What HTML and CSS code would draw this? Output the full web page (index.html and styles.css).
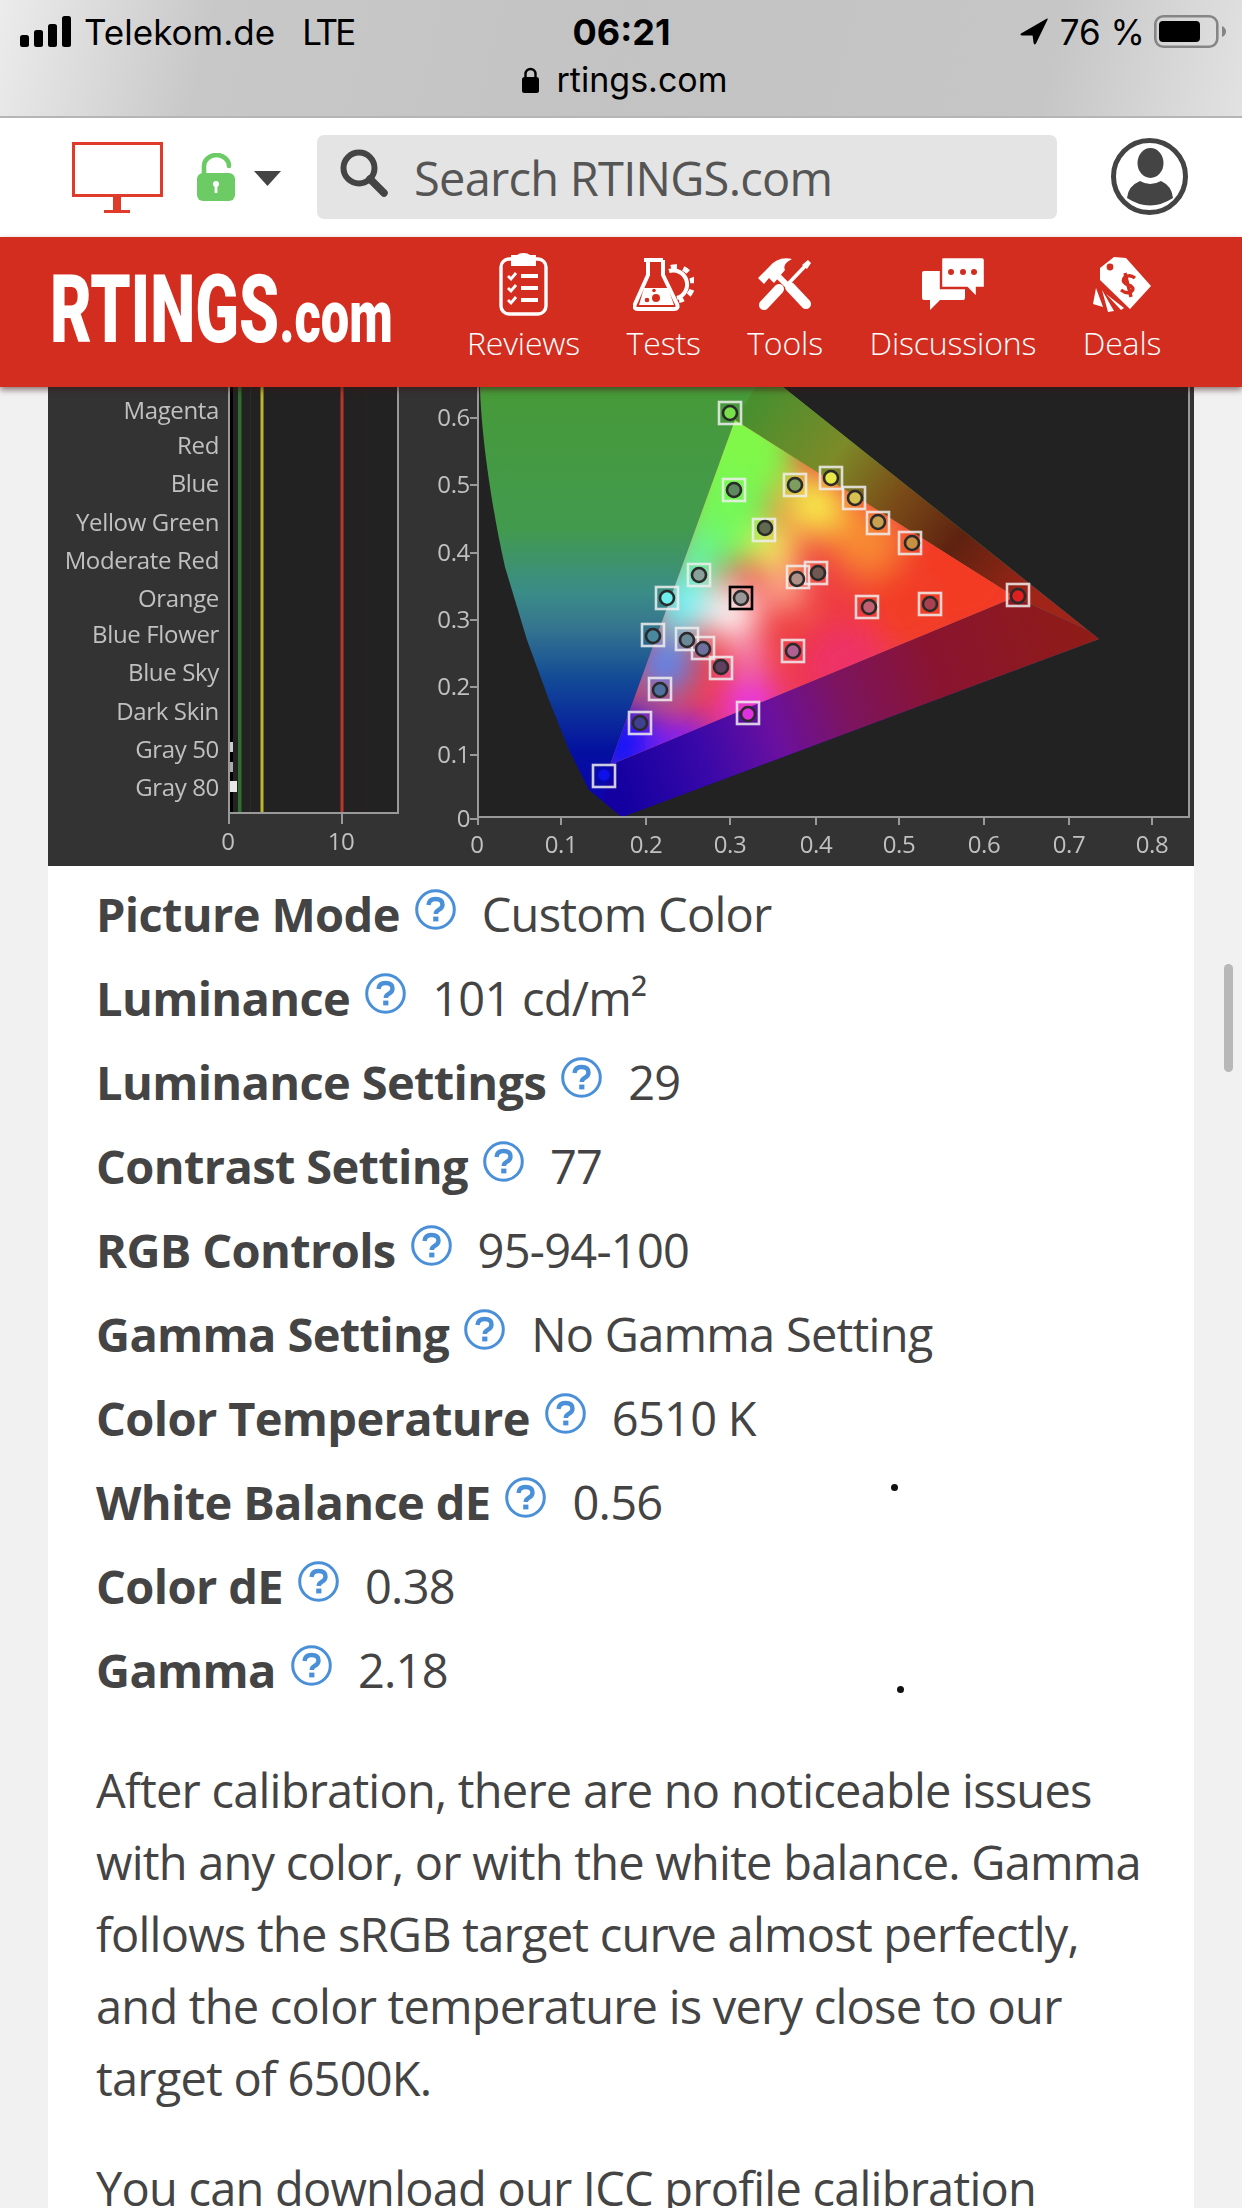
FILE: index.html
```html
<!DOCTYPE html>
<html lang="en">
<head>
<meta charset="utf-8">
<title>RTINGS.com</title>
<link rel="stylesheet" href="styles.css">
</head>
<body>
<svg class="defs" width="0" height="0">
  <symbol id="help" viewBox="0 0 41 41">
    <circle cx="20.5" cy="20.5" r="18.8" fill="none" stroke="#4a90d9" stroke-width="3"/>
    <path d="M13.5 16 Q14 10 20.5 10 Q27.5 10 27.5 15.5 Q27.5 19 23.5 21 Q20.8 22.4 20.8 25" fill="none" stroke="#4a90d9" stroke-width="4.4"/>
    <rect x="18.2" y="27.6" width="5.2" height="4.8" fill="#4a90d9"/>
  </symbol>
</svg>

<div class="status">
  <div class="status-top">
    <div class="status-left">
      <svg class="signal" width="51" height="31" viewBox="0 0 51 31"><rect x="0" y="19" width="9" height="12" rx="2.5"/><rect x="14" y="14" width="9" height="17" rx="2.5"/><rect x="28" y="8" width="9" height="23" rx="2.5"/><rect x="42" y="0" width="9" height="31" rx="2.5"/></svg>
      <span>Telekom.de</span><span class="lte">LTE</span>
    </div>
    <div class="status-time">06:21</div>
    <div class="status-right">
      <svg class="arrow" width="28" height="27" viewBox="0 0 28 27"><path d="M1 15.5 L27 0.5 Q28 0 27.6 1.5 L16 25.5 Q14.5 27.5 13.6 25 L12.6 17.5 L2 17.5 Q-0.5 16.8 1 15.5Z"/></svg>
      <span>76 %</span>
      <svg class="battery" width="72" height="33" viewBox="0 0 72 33"><rect x="1.3" y="1.3" width="62" height="30.4" rx="8" fill="none" stroke="#858585" stroke-width="2.6"/><rect x="5" y="6" width="41" height="21" rx="4" fill="#000"/><path d="M68 11 Q72 13 72 16.5 Q72 20 68 22Z" fill="#858585"/></svg>
    </div>
  </div>
  <div class="status-url">
    <svg width="17" height="26" viewBox="0 0 17 26"><path d="M3.5 11 V7 a5 5 0 0 1 10 0 V11" fill="none" stroke="#000" stroke-width="2.4"/><rect x="0" y="10" width="17" height="16" rx="2.5"/></svg>
    <span>rtings.com</span>
  </div>
</div>

<header class="topbar">
  <svg class="monitor" width="91" height="71" viewBox="0 0 91 71"><rect x="1.5" y="1.5" width="88" height="52" fill="none" stroke="#e03a2b" stroke-width="3"/><rect x="41" y="55" width="8" height="13" fill="#e03a2b"/><rect x="32" y="68" width="26" height="3" fill="#e03a2b"/></svg>
  <svg class="lock" width="38" height="48" viewBox="0 0 38 48"><path d="M7 24 V13 a12.5 11 0 0 1 25 0 V13" fill="none" stroke="#6ccb64" stroke-width="4.6" stroke-linecap="round"/><rect x="0" y="20" width="38" height="28" rx="6" fill="#6ccb64"/><circle cx="19" cy="31" r="3" fill="#fff"/><rect x="17.6" y="31" width="2.8" height="9" fill="#fff"/></svg>
  <svg class="caret" width="29" height="16" viewBox="0 0 29 16"><path d="M1 1 H28 L14.5 16Z" fill="#444"/></svg>
  <div class="search">
    <svg width="48" height="48" viewBox="0 0 48 48"><circle cx="19" cy="19" r="15.5" fill="none" stroke="#444" stroke-width="6"/><path d="M30 30 L44 44" stroke="#444" stroke-width="7.5" stroke-linecap="round"/></svg>
    <span>Search RTINGS.com</span>
  </div>
  <svg class="user" width="77" height="77" viewBox="0 0 77 77"><circle cx="38.5" cy="38.5" r="36" fill="none" stroke="#444" stroke-width="5"/><ellipse cx="39.5" cy="25" rx="13" ry="15" fill="#444"/><path d="M16 60 Q17 48 29 43 Q39 49 50 43 Q61 48 62 60 Q39 75 16 60Z" fill="#444"/></svg>
</header>

<nav class="redbar">
  <div class="logo"><span class="logo-main">RTINGS</span><span class="logo-sub">.com</span></div>
  <ul class="menu">
    <li class="menu-item">
      <svg width="49" height="63" viewBox="0 0 49 63"><rect x="2" y="6" width="45" height="55" rx="8" fill="none" stroke="#fff" stroke-width="3.4"/><path d="M12 2 H18 Q20 0 24.5 0 Q29 0 31 2 H37 V13 H12Z" fill="#fff"/><path d="M9 23 l3 3 l5 -6 M9 35 l3 3 l5 -6 M9 47 l3 3 l5 -6" fill="none" stroke="#fff" stroke-width="2.8"/><path d="M22 23 H39 M22 35 H39 M22 47 H39" stroke="#fff" stroke-width="4"/></svg>
      <span>Reviews</span>
    </li>
    <li class="menu-item">
      <svg width="61" height="53" viewBox="0 0 61 53"><path d="M36 13 A14 14 0 1 1 44 40" fill="none" stroke="#fff" stroke-width="4"/><path d="M38 9.5 A17 17 0 1 1 46 42.5" fill="none" stroke="#fff" stroke-width="5" stroke-dasharray="6 6.5"/><path d="M11 2 H30 M15 2 V17 L2 46 Q0 51 5 51 H41 Q46 51 44 46 L30 17 V2" fill="#d32d1f" stroke="#fff" stroke-width="4" stroke-linejoin="round"/><path d="M11 30 H35 L41 47 H6Z" fill="#fff"/><circle cx="23" cy="40" r="4" fill="#d32d1f"/><circle cx="14" cy="42" r="2.3" fill="#d32d1f"/><circle cx="21" cy="32.5" r="1.8" fill="#d32d1f"/></svg>
      <span>Tests</span>
    </li>
    <li class="menu-item">
      <svg width="54" height="53" viewBox="0 0 54 53"><path d="M51 4 L29 27" stroke="#fff" stroke-width="3.6"/><path d="M50 2 L53 5 L49 11 L44 7Z" fill="#fff"/><path d="M21 31 L6 47" stroke="#fff" stroke-width="10" stroke-linecap="round"/><path d="M32 29 L48 46" stroke="#fff" stroke-width="10" stroke-linecap="round"/><path d="M16 14 L31 29" stroke="#fff" stroke-width="6"/><path d="M0 20 L11 9 Q20 -2 34 1 Q24 6 27 12 L16 25 L11 20 L6 26Z" fill="#fff"/></svg>
      <span>Tools</span>
    </li>
    <li class="menu-item">
      <svg width="62" height="53" viewBox="0 0 62 53"><path d="M2 13 H41 Q43 13 43 15 V40 Q43 42 41 42 H18 L8 52 V42 H2 Q0 42 0 40 V15 Q0 13 2 13Z" fill="#fff"/><path d="M21 -1 H60 Q63 -1 63 2 V30 H55 V40 L45 30 H19 V2 Q19 -1 21 -1Z" fill="#fff" stroke="#d32d1f" stroke-width="2.4"/><circle cx="29" cy="14" r="3" fill="#d32d1f"/><circle cx="41" cy="14" r="3" fill="#d32d1f"/><circle cx="52" cy="14" r="3" fill="#d32d1f"/></svg>
      <span>Discussions</span>
    </li>
    <li class="menu-item">
      <svg width="58" height="55" viewBox="0 0 58 55"><path d="M3 31 L10 50 L0 47Z M9 33 L21 54 L15 55Z" fill="#fff"/><path d="M13 37 L28 53 L31 51Z" fill="#fff"/><path d="M7 11 L21 0 L33 1 L58 29 L37 52 L7 23Z" fill="#fff"/><circle cx="17" cy="10" r="3.4" fill="#d32d1f"/><path d="M42 21 Q37 17 32 20 Q28 24 33 27 L38 29 Q42 32 38 35 Q33 37 28 33 M32 16 L38 40" fill="none" stroke="#d32d1f" stroke-width="3.4"/></svg>
      <span>Deals</span>
    </li>
  </ul>
</nav>

<main class="page">
  <article class="card">
    <svg class="chart" width="1146" height="479" viewBox="48 387 1146 479">
      <defs>
        <clipPath id="locus"><path d="M480 387 C481 430 490 500 505 567 L527 640 L549 700 L569 750 L589 790 L622 817 L1099 639 L783 387Z"/></clipPath>
        <clipPath id="tri"><path d="M735 420 L1015 597 L610 765Z"/></clipPath>
        <filter id="soft" x="-60%" y="-60%" width="220%" height="220%"><feGaussianBlur stdDeviation="16"/></filter>
        <linearGradient id="leftfade" x1="0" y1="387" x2="0" y2="817" gradientUnits="userSpaceOnUse">
          <stop offset="0" stop-color="#479a38"/><stop offset=".33" stop-color="#429a4e"/><stop offset=".48" stop-color="#3a8c88"/><stop offset=".56" stop-color="#35758f"/><stop offset=".68" stop-color="#124a96"/><stop offset=".85" stop-color="#0410a0"/><stop offset="1" stop-color="#1000b0"/>
        </linearGradient>
        <linearGradient id="topwedge" x1="760" y1="400" x2="1030" y2="600" gradientUnits="userSpaceOnUse">
          <stop offset="0" stop-color="#4a8f2e"/><stop offset=".28" stop-color="#7d8a28"/><stop offset=".5" stop-color="#7a4c18"/><stop offset=".72" stop-color="#5e2210"/><stop offset="1" stop-color="#a02518"/>
        </linearGradient>
        <linearGradient id="botwedge" x1="620" y1="790" x2="1090" y2="630" gradientUnits="userSpaceOnUse">
          <stop offset="0" stop-color="#1400a0"/><stop offset=".18" stop-color="#3a08a8"/><stop offset=".33" stop-color="#6a10a0"/><stop offset=".48" stop-color="#7c1460"/><stop offset=".68" stop-color="#8a1430"/><stop offset="1" stop-color="#8f1c16"/>
        </linearGradient>
      </defs>
      <rect class="panel" x="48" y="387" width="1146" height="479"/>

      <rect class="plot" x="229" y="387" width="169" height="426"/>
      <rect class="axis" x="397" y="387" width="2" height="427"/>
      <rect class="axis" x="228" y="812" width="171" height="2"/>
      <rect class="axis" x="228" y="387" width="2" height="437"/>
      <rect x="230" y="387" width="3" height="425" fill="#000"/>
      <rect x="238" y="387" width="3.5" height="425" fill="#2f6e2c"/>
      <rect x="260.5" y="387" width="3" height="425" fill="#bdb52e"/>
      <rect x="340.5" y="387" width="3" height="425" fill="#b8362a"/>
      <rect x="250" y="387" width="1" height="425" fill="#2b2b2b"/>
      <rect x="357" y="387" width="1" height="425" fill="#301f1f"/>
      <rect x="366" y="387" width="1" height="425" fill="#301f1f"/>
      <rect class="axis" x="341" y="813" width="2" height="11"/>
      <rect x="230" y="781" width="7" height="11" fill="#e8e8e8"/>
      <rect x="230" y="742" width="3" height="10" fill="#ccc"/>
      <rect x="230" y="762" width="3" height="10" fill="#aaa"/>
      <g class="lab end">
        <text x="219" y="419">Magenta</text>
        <text x="219" y="454">Red</text>
        <text x="219" y="492">Blue</text>
        <text x="219" y="531">Yellow Green</text>
        <text x="219" y="569">Moderate Red</text>
        <text x="219" y="607">Orange</text>
        <text x="219" y="643">Blue Flower</text>
        <text x="219" y="681">Blue Sky</text>
        <text x="219" y="720">Dark Skin</text>
        <text x="219" y="758">Gray 50</text>
        <text x="219" y="796">Gray 80</text>
      </g>
      <g class="lab mid">
        <text x="228" y="850">0</text>
        <text x="341" y="850">10</text>
      </g>

      <rect class="plot" x="478" y="387" width="711" height="430"/>
      <g clip-path="url(#locus)">
        <rect x="470" y="380" width="640" height="440" fill="url(#leftfade)"/>
        <path d="M735 420 L760 380 L800 380 L1110 640 L1015 597Z" fill="url(#topwedge)"/>
        <path d="M610 765 L1015 597 L1110 640 L640 830 L600 820Z" fill="url(#botwedge)"/>
      </g>
      <g clip-path="url(#tri)">
        <rect x="600" y="410" width="430" height="370" fill="#ee3c40"/>
        <g filter="url(#soft)">
          <circle cx="738" cy="450" r="60" fill="#80f848"/>
          <circle cx="725" cy="520" r="48" fill="#74f858"/>
          <circle cx="695" cy="560" r="30" fill="#66f296"/>
          <circle cx="815" cy="505" r="30" fill="#f8f048"/>
          <circle cx="775" cy="550" r="22" fill="#f8f460"/>
          <circle cx="865" cy="540" r="36" fill="#f88a30"/>
          <circle cx="965" cy="575" r="62" fill="#f23a20"/>
          <circle cx="905" cy="610" r="46" fill="#f23c28"/>
          <circle cx="682" cy="605" r="30" fill="#70f6f8"/>
          <circle cx="732" cy="612" r="26" fill="#ffffff"/>
          <circle cx="785" cy="590" r="18" fill="#ffcca8"/>
          <circle cx="748" cy="655" r="16" fill="#f898e8"/>
          <circle cx="665" cy="665" r="30" fill="#5888f0"/>
          <circle cx="625" cy="745" r="42" fill="#1818f8"/>
          <circle cx="685" cy="745" r="32" fill="#8420f4"/>
          <circle cx="750" cy="705" r="30" fill="#e838e8"/>
          <circle cx="845" cy="668" r="44" fill="#ee3068"/>
        </g>
      </g>
      <rect class="axis" x="477" y="387" width="2" height="431"/>
      <rect class="axis" x="1188" y="387" width="2" height="431"/>
      <rect class="axis" x="477" y="816" width="713" height="2"/>
      <path class="tick" d="M478 818v7M561 818v7M646 818v7M730 818v7M816 818v7M899 818v7M984 818v7M1069 818v7M1152 818v7M470 418h8M470 485h8M470 553h8M470 620h8M470 687h8M470 755h8M470 819h8"/>
      <g class="lab mid">
        <text x="477" y="853">0</text><text x="561" y="853">0.1</text><text x="646" y="853">0.2</text><text x="730" y="853">0.3</text><text x="816" y="853">0.4</text><text x="899" y="853">0.5</text><text x="984" y="853">0.6</text><text x="1069" y="853">0.7</text><text x="1152" y="853">0.8</text>
      </g>
      <g class="lab end">
        <text x="470" y="426">0.6</text><text x="470" y="493">0.5</text><text x="470" y="561">0.4</text><text x="470" y="628">0.3</text><text x="470" y="695">0.2</text><text x="470" y="763">0.1</text><text x="470" y="827">0</text>
      </g>

      <g class="sq">
        <rect x="719" y="402" width="22" height="22"/><rect x="723" y="479" width="22" height="22"/><rect x="784" y="474" width="22" height="22"/><rect x="820" y="467" width="22" height="22"/><rect x="843" y="487" width="22" height="22"/><rect x="867" y="512" width="22" height="22"/><rect x="899" y="532" width="22" height="22"/><rect x="753" y="519" width="22" height="22"/><rect x="688" y="564" width="22" height="22"/><rect x="656" y="587" width="22" height="22"/><rect x="787" y="566" width="22" height="22"/><rect x="805" y="562" width="22" height="22"/><rect x="856" y="596" width="22" height="22"/><rect x="919" y="593" width="22" height="22"/><rect x="1007" y="584" width="22" height="22"/><rect x="642" y="624" width="22" height="22"/><rect x="676" y="628" width="22" height="22"/><rect x="692" y="637" width="22" height="22"/><rect x="710" y="657" width="22" height="22"/><rect x="782" y="640" width="22" height="22"/><rect x="649" y="678" width="22" height="22"/><rect x="737" y="702" width="22" height="22"/><rect x="629" y="712" width="22" height="22"/><rect x="593" y="765" width="22" height="22"/>
        <rect class="sq-black" x="730" y="587" width="22" height="22"/>
      </g>
      <g class="pt">
        <circle cx="730" cy="413" r="7" fill="#78e04a"/><circle cx="734" cy="490" r="7" fill="#5f8a5f"/><circle cx="795" cy="485" r="7" fill="#7e9e5f"/><circle cx="831" cy="478" r="7" fill="#e8e84a"/><circle cx="855" cy="498" r="7" fill="#d8c050"/><circle cx="878" cy="522" r="7" fill="#c8a050"/><circle cx="912" cy="543" r="7" fill="#c89040"/><circle cx="765" cy="528" r="7" fill="#5f6a50"/><circle cx="699" cy="575" r="7" fill="#8aa09a"/><circle cx="667" cy="598" r="7" fill="#70eeee"/><circle cx="741" cy="598" r="7" fill="#999"/><circle cx="797" cy="579" r="7" fill="#b09088"/><circle cx="818" cy="573" r="7" fill="#705850"/><circle cx="869" cy="607" r="7" fill="#c06070"/><circle cx="930" cy="604" r="7" fill="#a84050"/><circle cx="1018" cy="596" r="7" fill="#e02020"/><circle cx="653" cy="636" r="7" fill="#4a88a0"/><circle cx="687" cy="640" r="7" fill="#6a8898"/><circle cx="703" cy="649" r="7" fill="#7070a0"/><circle cx="721" cy="667" r="7" fill="#604060"/><circle cx="793" cy="651" r="7" fill="#b06090"/><circle cx="660" cy="690" r="7" fill="#5070a0"/><circle cx="748" cy="714" r="7" fill="#e030e0"/><circle cx="640" cy="723" r="7" fill="#404090"/><circle class="pt-blue" cx="604" cy="775" r="7" fill="#1010e8"/>
      </g>
    </svg>

    <section class="specs">
      <div class="spec"><b>Picture Mode</b><svg class="help"><use href="#help"/></svg><span>Custom Color</span></div>
      <div class="spec"><b>Luminance</b><svg class="help"><use href="#help"/></svg><span>101 cd/m²</span></div>
      <div class="spec"><b>Luminance Settings</b><svg class="help"><use href="#help"/></svg><span>29</span></div>
      <div class="spec"><b>Contrast Setting</b><svg class="help"><use href="#help"/></svg><span>77</span></div>
      <div class="spec"><b>RGB Controls</b><svg class="help"><use href="#help"/></svg><span>95-94-100</span></div>
      <div class="spec"><b>Gamma Setting</b><svg class="help"><use href="#help"/></svg><span>No Gamma Setting</span></div>
      <div class="spec"><b>Color Temperature</b><svg class="help"><use href="#help"/></svg><span>6510 K</span></div>
      <div class="spec"><b>White Balance dE</b><svg class="help"><use href="#help"/></svg><span>0.56</span></div>
      <div class="spec"><b>Color dE</b><svg class="help"><use href="#help"/></svg><span>0.38</span></div>
      <div class="spec"><b>Gamma</b><svg class="help"><use href="#help"/></svg><span>2.18</span></div>
    </section>

    <p class="para">After calibration, there are no noticeable issues with any color, or with the white balance. Gamma follows the sRGB target curve almost perfectly, and the color temperature is very close to our target of 6500K.</p>
    <p class="para">You can download our ICC profile calibration</p>

    <i class="dot dot-a"></i>
    <i class="dot dot-b"></i>
  </article>
  <div class="scroll-thumb"></div>
</main>
</body>
</html>
```
FILE: styles.css
```css
* { box-sizing: border-box; }
html, body { margin: 0; padding: 0; }
body {
  width: 1242px;
  height: 2208px;
  overflow: hidden;
  background: #f1f1f1;
  color: #444;
  font-family: "Open Sans", "Liberation Sans", sans-serif;
}
.defs { display: block; height: 0; }

.status {
  height: 118px;
  padding: 10px 16px 0 20px;
  border-bottom: 2px solid #b5b5b5;
  background: linear-gradient(103deg, #ececec 0%, #c8c8c8 17%, #c3c3c3 50%, #c6c6c6 84%, #e2e2e2 100%);
  color: #000;
  font-family: Inter, Roboto, "Liberation Sans", sans-serif;
  font-size: 35px;
}
.status-top {
  display: grid;
  grid-template-columns: 1fr auto 1fr;
  align-items: center;
  height: 38px;
}
.status-left { display: flex; align-items: center; gap: 13px; }
.signal { margin-top: -2px; }
.signal rect { fill: #000; }
.lte { margin-left: 14px; letter-spacing: -3px; }
.status-time { font-weight: 700; font-size: 36px; margin-left: -3px; }
.status-right { display: flex; align-items: center; justify-content: flex-end; gap: 12px; }
.arrow { margin-top: -2px; }
.battery { margin: -1px 0 0 -3px; }
.status-url {
  display: flex;
  align-items: center;
  justify-content: center;
  gap: 18px;
  margin-top: 11px;
  padding-left: 3px;
  font-size: 34px;
}

.topbar {
  display: flex;
  align-items: flex-start;
  height: 119px;
  background: #fff;
}
.monitor { margin: 24px 0 0 72px; }
.lock { margin: 35px 0 0 34px; }
.caret { margin: 52px 0 0 18px; }
.search {
  display: flex;
  align-items: center;
  gap: 26px;
  width: 740px;
  height: 84px;
  margin: 17px 0 0 35px;
  padding-left: 23px;
  border-radius: 7px;
  background: #e4e4e4;
  color: #555;
  font-size: 47px;
  letter-spacing: -0.75px;
}
.search span { padding-top: 2px; }
.search svg { margin-top: -8px; }
.user { margin: 20px 0 0 54px; }

.redbar {
  position: relative;
  z-index: 2;
  display: flex;
  height: 150px;
  background: #d32d1f;
  box-shadow: 0 3px 6px rgba(60, 20, 20, .55);
}
.logo {
  width: 339px;
  margin: 23px 0 0 50px;
  color: #fff;
  font-family: Roboto, "Liberation Sans", sans-serif;
  font-weight: 900;
  line-height: 100px;
  white-space: nowrap;
  transform: scaleX(.683);
  transform-origin: left center;
}
.logo-main { font-size: 94px; }
.logo-sub { font-size: 74px; }
.menu {
  display: flex;
  gap: 46.5px;
  margin: 16px 0 0 78px;
  padding: 0;
  list-style: none;
}
.menu-item {
  display: flex;
  flex-direction: column;
  align-items: center;
  height: 120px;
  color: #fff;
  font-size: 32px;
  font-weight: 300;
}
.menu-item svg { height: 63px; margin-bottom: 5px; }
.menu-item span { line-height: 44px; letter-spacing: -0.15px; }

.page { position: relative; height: 1821px; }
.card {
  position: relative;
  width: 1146px;
  height: 1821px;
  margin-left: 48px;
  background: #fff;
}
.chart { display: block; filter: blur(.7px); }
.panel { fill: #333; }
.plot { fill: #222; }
.axis { fill: #999; }
.tick { stroke: #999; stroke-width: 2; fill: none; }
.lab { fill: #c0c0c0; font-family: "Open Sans", sans-serif; font-size: 24px; letter-spacing: -0.35px; }
.end { text-anchor: end; }
.mid { text-anchor: middle; }
.sq rect { fill: none; stroke: #eee; stroke-width: 2.6; opacity: .85; }
.sq .sq-black { stroke: #000; opacity: 1; }
.pt circle { stroke: #2a2a2a; stroke-width: 2.6; }
.pt .pt-blue { stroke: #0808b0; }

.specs { padding: 6px 0 0 48px; margin-bottom: 42px; }
.spec {
  display: flex;
  align-items: center;
  height: 84px;
  font-size: 47px;
}
.spec b { font-weight: 700; letter-spacing: -0.65px; }
.spec span { font-weight: 400; letter-spacing: -0.75px; }
.help { width: 41px; height: 41px; margin: -10px 26px 0 15px; flex: none; }

.para {
  width: 1060px;
  margin: 0 0 38px 48px;
  font-size: 47px;
  line-height: 72px;
  letter-spacing: -0.78px;
}
.dot {
  position: absolute;
  width: 7px;
  height: 7px;
  border-radius: 50%;
  background: #111;
}
.dot-a { left: 843px; top: 1097px; }
.dot-b { left: 849px; top: 1299px; }

.scroll-thumb {
  position: absolute;
  top: 577px;
  left: 1224px;
  width: 9px;
  height: 108px;
  border-radius: 5px;
  background: #b8b8b8;
}
```
